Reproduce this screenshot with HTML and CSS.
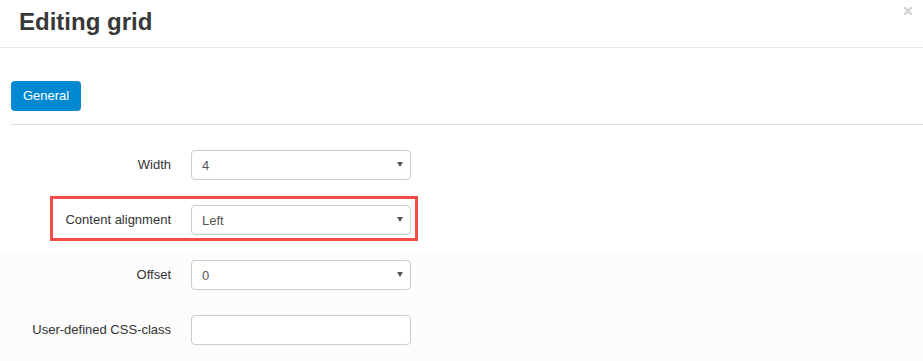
FILE: index.html
```html
<!DOCTYPE html>
<html>
<head>
<meta charset="utf-8">
<link rel="stylesheet" href="styles.css">
</head>
<body>
<div class="modal">
  <div class="modal-header">
    <h1 class="modal-title">Editing grid</h1>
    <button class="close" aria-label="Close">
      <svg width="8" height="8" viewBox="0 0 8 8"><path d="M1 1 L7 7 M7 1 L1 7" stroke="#d4d4d4" stroke-width="2.4" stroke-linecap="square"/></svg>
    </button>
  </div>
  <div class="modal-body">
    <div class="tabs">
      <button class="tab active">General</button>
    </div>
    <div class="form">
      <div class="row">
        <label class="label">Width</label>
        <div class="select"><span>4</span><i class="caret"></i></div>
      </div>
      <div class="row highlighted">
        <label class="label">Content alignment</label>
        <div class="select"><span>Left</span><i class="caret"></i></div>
      </div>
      <div class="row">
        <label class="label">Offset</label>
        <div class="select"><span>0</span><i class="caret"></i></div>
      </div>
      <div class="row">
        <label class="label">User-defined CSS-class</label>
        <div class="input"></div>
      </div>
    </div>
  </div>
</div>
</body>
</html>
```
FILE: styles.css
```css
html, body {
  margin: 0;
  padding: 0;
}
body {
  width: 923px;
  height: 361px;
  overflow: hidden;
  font-family: "Liberation Sans", Arial, sans-serif;
  color: #333;
  background: linear-gradient(to bottom, #ffffff 0, #ffffff 252px, #fcfcfc 252px, #fcfcfc 100%);
}
.modal-header {
  display: flex;
  justify-content: space-between;
  align-items: flex-start;
  height: 47px;
  border-bottom: 1px solid #e9e9e9;
  box-sizing: content-box;
}
.modal-title {
  margin: 0;
  padding: 8px 0 0 19px;
  font-size: 24px;
  line-height: 28px;
  font-weight: bold;
  color: #383838;
}
.close {
  border: 0;
  background: none;
  padding: 0;
  margin: 7px 11px 0 0;
  width: 8px;
  height: 8px;
  display: block;
}
.close svg { display: block; }
.modal-body {
  padding: 33px 0 0 11px;
}
.tabs {
  border-bottom: 1px solid #dddddd;
  padding-bottom: 13px;
}
.tab {
  display: block;
  width: 70px;
  height: 30px;
  border: 0;
  border-radius: 4px;
  background: #0288d1;
  color: #fff;
  font-family: "Liberation Sans", Arial, sans-serif;
  font-size: 13px;
  line-height: 29px;
  padding: 0 0 1px;
}
.form {
  display: flex;
  flex-direction: column;
  gap: 25px;
  padding-top: 25px;
}
.row {
  display: grid;
  grid-template-columns: 160px 220px;
  column-gap: 20px;
  align-items: center;
  height: 30px;
  position: relative;
}
.label {
  text-align: right;
  font-size: 13px;
  color: #333;
  margin-top: -1px;
}
.highlighted::before {
  content: "";
  position: absolute;
  left: 39px;
  top: -9px;
  width: 362px;
  height: 39px;
  border: 3px solid #f44c47;
  pointer-events: none;
}
.select, .input {
  height: 30px;
  box-sizing: border-box;
  border: 1px solid #cccccc;
  border-radius: 4px;
  background: #fff;
}
.select {
  display: flex;
  align-items: center;
  justify-content: space-between;
  padding: 0 7px 0 10px;
  font-size: 13px;
  color: #555;
}
.caret {
  width: 0;
  height: 0;
  border-left: 3px solid transparent;
  border-right: 3px solid transparent;
  border-top: 5px solid #555;
  margin-top: -1px;
}
```
